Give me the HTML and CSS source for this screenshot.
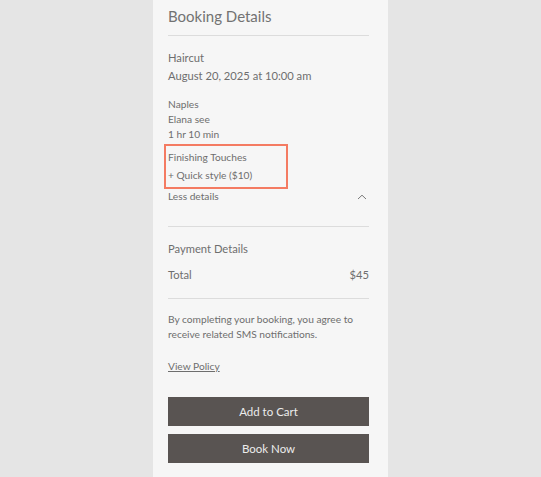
FILE: index.html
```html
<!DOCTYPE html>
<html>
<head>
<meta charset="utf-8">
<link rel="stylesheet" href="styles.css">
</head>
<body>
<div class="panel">
  <h1 class="title">Booking Details</h1>
  <div class="service">
    <div class="lg">Haircut</div>
    <div class="lg">August 20, 2025 at 10:00 am</div>
  </div>
  <div class="meta">
    <div>Naples</div>
    <div>Elana see</div>
    <div>1 hr 10 min</div>
  </div>
  <div class="addons">
    <div>Finishing Touches</div>
    <div>+ Quick style ($10)</div>
  </div>
  <div class="less">
    <span>Less details</span>
    <svg class="chev" width="10" height="6" viewBox="0 0 10 6"><path d="M1 5 L5 1.2 L9 5" fill="none" stroke="#7a7a7a" stroke-width="1"/></svg>
  </div>
  <div class="payment">
    <div class="lg">Payment Details</div>
    <div class="lg total"><span>Total</span><span>$45</span></div>
  </div>
  <div class="terms">
    <p>By completing your booking, you agree to receive related SMS notifications.</p>
    <a class="policy" href="#">View Policy</a>
  </div>
  <div class="actions">
    <button class="btn">Add to Cart</button>
    <button class="btn">Book Now</button>
  </div>
</div>
</body>
</html>
```
FILE: styles.css
```css
html, body {
  margin: 0;
  padding: 0;
  background: #e5e5e5;
  height: 100%;
}
body {
  display: flex;
  justify-content: center;
  font-family: Lato, "Noto Sans", sans-serif;
  font-weight: 400;
  color: #6e6e6e;
}
.panel {
  width: 235px;
  min-height: 477px;
  box-sizing: border-box;
  background: #f6f6f6;
  padding: 6px 19px 0 15px;
}
.title {
  margin: 0;
  font-size: 15px;
  line-height: 20px;
  font-weight: 400;
  color: #727272;
  padding-bottom: 9px;
  border-bottom: 1px solid #dcdcdc;
}
.lg {
  font-size: 11.2px;
  line-height: 18px;
}
.service {
  margin-top: 13px;
}
.meta {
  margin-top: 12px;
  font-size: 10.2px;
  line-height: 15px;
}
.addons {
  margin: 2px 0 0 -4px;
  width: 124px;
  box-sizing: border-box;
  border: 2px solid #f47b62;
  padding: 2px 0 3px 2px;
  font-size: 10.2px;
  line-height: 18px;
}
.less {
  display: flex;
  justify-content: space-between;
  align-items: center;
  font-size: 10.2px;
  line-height: 15px;
  padding-bottom: 22px;
  border-bottom: 1px solid #dcdcdc;
}
.chev {
  margin-right: 2px;
}
.payment {
  padding-top: 13px;
  padding-bottom: 14px;
  border-bottom: 1px solid #dcdcdc;
}
.total {
  display: flex;
  justify-content: space-between;
  margin-top: 8px;
}
.terms {
  padding-top: 13px;
  font-size: 10.2px;
  line-height: 15px;
}
.terms p {
  margin: 0;
}
.policy {
  display: inline-block;
  margin-top: 17px;
  color: #6e6e6e;
  text-decoration: underline;
}
.actions {
  display: flex;
  flex-direction: column;
  gap: 8px;
  margin-top: 23px;
}
.btn {
  height: 29px;
  border: none;
  background: #595452;
  color: #ececec;
  font-family: Lato, "Noto Sans", sans-serif;
  font-weight: 400;
  font-size: 11.5px;
  padding: 0;
}
```
